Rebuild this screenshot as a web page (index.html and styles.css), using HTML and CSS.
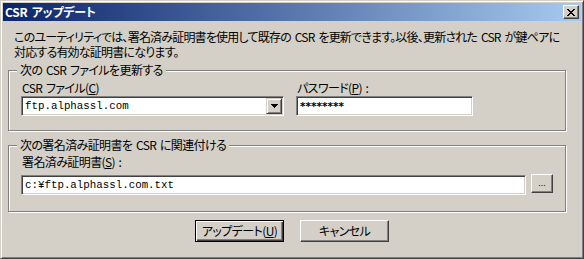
FILE: index.html
```html
<!DOCTYPE html>
<html lang="ja">
<head>
<meta charset="utf-8">
<title>CSR アップデート</title>
<link rel="stylesheet" href="styles.css">
</head>
<body>
<div class="window">
  <div class="titlebar">
    <span class="title">CSR アップデート</span>
    <span class="close"><svg width="8" height="7" viewBox="0 0 8 7" shape-rendering="crispEdges"><path fill="#000" d="M0 0h2v1h-2z M6 0h2v1h-2z M1 1h2v1h-2z M5 1h2v1h-2z M2 2h4v1h-4z M3 3h2v1h-2z M2 4h4v1h-4z M1 5h2v1h-2z M5 5h2v1h-2z M0 6h2v1h-2z M6 6h2v1h-2z"/></svg></span>
  </div>
  <div class="body">
    <p class="intro">このユーティリティでは、署名済み証明書を使用して既存の CSR を更新できます。以後、更新された CSR が鍵ペアに<br>対応する有効な証明書になります。</p>
    <fieldset class="group g1">
      <legend>次の CSR ファイルを更新する</legend>
      <div class="cols">
        <div class="field">
          <label class="lbl">CSR ファイル(<u>C</u>)</label>
          <div class="combo">
            <span class="mono">ftp.alphassl.com</span>
            <span class="drop"><svg width="7" height="4" viewBox="0 0 7 4" shape-rendering="crispEdges"><path fill="#000" d="M0 0h7v1h-7z M1 1h5v1h-5z M2 2h3v1h-3z M3 3h1v1h-1z"/></svg></span>
          </div>
        </div>
        <div class="field">
          <label class="lbl">パスワード(<u>P</u>) :</label>
          <div class="edit pw">********</div>
        </div>
      </div>
    </fieldset>
    <fieldset class="group g2">
      <legend>次の署名済み証明書を CSR に関連付ける</legend>
      <label class="lbl">署名済み証明書(<u>S</u>) :</label>
      <div class="filerow">
        <div class="edit path"><span class="mono">c:¥ftp.alphassl.com.txt</span></div>
        <span class="browse">...</span>
      </div>
    </fieldset>
    <div class="actions">
      <span class="btn default">アップデート(<u>U</u>)</span>
      <span class="btn">キャンセル</span>
    </div>
  </div>
</div>
</body>
</html>
```
FILE: styles.css
```css
* { box-sizing: border-box; }
html, body { margin: 0; padding: 0; background: #d4d0c8; }
body {
  font-family: "Noto Sans CJK JP", "Noto Sans", sans-serif;
  font-size: 12px;
  font-feature-settings: "palt";
  letter-spacing: -0.6px;
  word-spacing: 1.5px;
  color: #000;
}
.window {
  width: 584px;
  height: 259px;
  background: #d4d0c8;
  border: 1px solid;
  border-color: #d4d0c8 #404040 #404040 #d4d0c8;
  box-shadow: inset 1px 1px #fff, inset -1px -1px #808080;
  padding: 2px;
  display: flex;
  flex-direction: column;
  overflow: hidden;
}
.titlebar {
  height: 18px;
  flex: none;
  background: linear-gradient(to right, #0a246a, #a6caf0);
  display: flex;
  align-items: center;
  justify-content: space-between;
  padding: 0 2px;
}
.title {
  color: #fff;
  font-weight: bold;
  line-height: 18px;
  letter-spacing: -0.2px;
}
.close {
  width: 16px;
  height: 14px;
  background: #d4d0c8;
  border: 1px solid;
  border-color: #fff #404040 #404040 #fff;
  box-shadow: inset -1px -1px #808080;
  display: flex;
  align-items: center;
  justify-content: center;
}
.close svg { display: block; }
.body {
  flex: 1;
  padding: 8px 5px 0;
}
.intro {
  margin: 0 0 4px 6px;
  line-height: 15px;
  letter-spacing: -0.8px;
  word-spacing: 2px;
  white-space: nowrap;
}
.group {
  margin: 0;
  width: 558px;
  min-width: 0;
  border: 1px solid #808080;
  box-shadow: inset 1px 1px #fff, 1px 1px #fff;
}
.group legend {
  padding: 0 3px;
  margin-left: -4px;
  line-height: 14px;
  background: #d4d0c8;
}
.g1 { padding: 4px 12px 14px; }
.g2 { padding: 3px 12px 16px; margin-top: 7px; }
.cols {
  display: grid;
  grid-template-columns: 263px 177px;
  column-gap: 12px;
}
.lbl {
  display: block;
  line-height: 14px;
  margin-left: 1px;
}
.combo, .edit {
  height: 20px;
  background: #fff;
  border: 1px solid;
  border-color: #808080 #fff #fff #808080;
  box-shadow: inset 1px 1px #404040, inset -1px -1px #d4d0c8;
  padding: 1px;
  display: flex;
  align-items: center;
}
.combo {
  margin-top: 1px;
  justify-content: space-between;
}
.mono {
  font-family: "Liberation Mono", monospace;
  font-size: 10.8px;
  font-feature-settings: normal;
  letter-spacing: 0;
  word-spacing: 0;
  padding-left: 2px;
  white-space: nowrap;
}
.drop {
  width: 16px;
  height: 16px;
  background: #d4d0c8;
  border: 1px solid;
  border-color: #d4d0c8 #404040 #404040 #d4d0c8;
  box-shadow: inset 1px 1px #fff, inset -1px -1px #808080;
  display: flex;
  align-items: center;
  justify-content: center;
}
.drop svg { display: block; }
.pw {
  margin-top: 1px;
  font-family: "DejaVu Sans", sans-serif;
  font-weight: bold;
  font-size: 10.5px;
  padding-left: 3px;
  letter-spacing: 0;
}
.filerow {
  display: flex;
  align-items: flex-start;
  gap: 5px;
  margin-top: 5px;
}
.path {
  width: 505px;
  margin-top: 1px;
}
.browse {
  width: 22px;
  height: 19px;
  background: #d4d0c8;
  border: 1px solid;
  border-color: #fff #404040 #404040 #fff;
  box-shadow: inset -1px -1px #808080;
  font-family: "Liberation Sans", sans-serif;
  font-size: 9px;
  line-height: 17px;
  text-align: center;
  letter-spacing: 0;
}
.actions {
  display: flex;
  justify-content: center;
  gap: 16px;
  margin-top: 8px;
}
.btn {
  width: 89px;
  height: 22px;
  background: #d4d0c8;
  border: 1px solid;
  border-color: #fff #404040 #404040 #fff;
  box-shadow: inset -1px -1px #808080;
  display: flex;
  align-items: center;
  justify-content: center;
  line-height: 14px;
}
.btn.default {
  border-color: #000;
  box-shadow: inset 1px 1px #fff, inset -1px -1px #404040, inset -2px -2px #808080;
}
```
